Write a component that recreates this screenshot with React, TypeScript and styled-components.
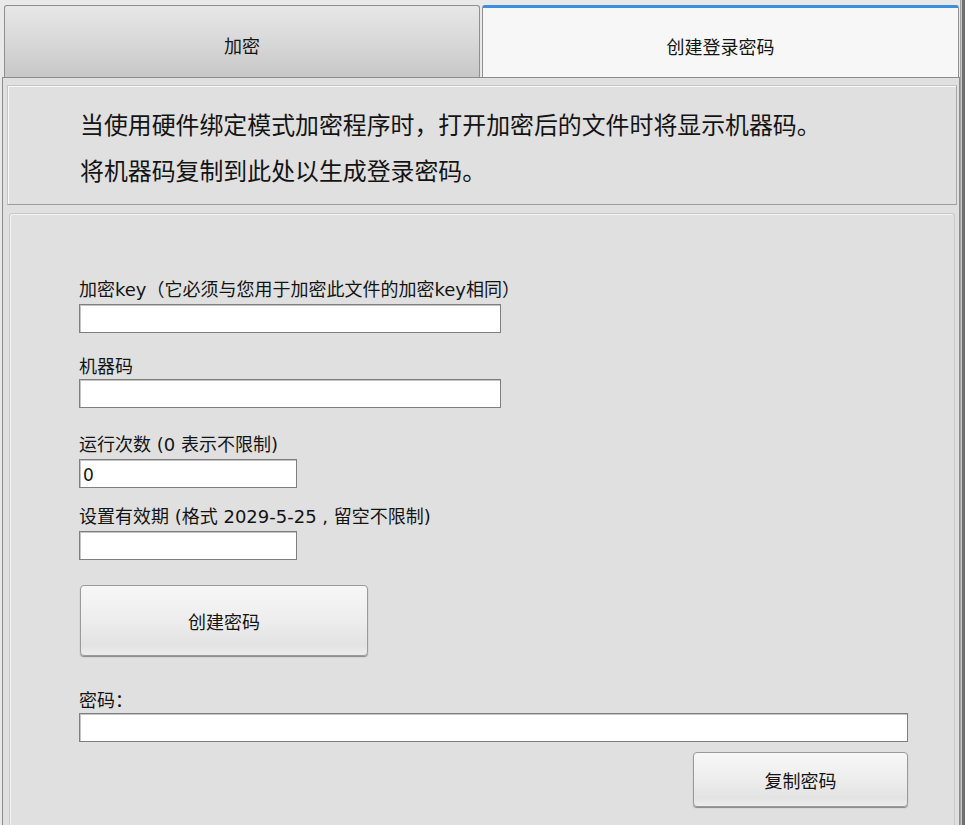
import styled, { createGlobalStyle } from "styled-components";

const GlobalStyle = createGlobalStyle`
  html, body {
    margin: 0;
    padding: 0;
    background: #e9e9e9;
  }
  * {
    box-sizing: border-box;
  }
`;

const Frame = styled.div`
  width: 965px;
  height: 825px;
  overflow: hidden;
  padding-top: 5px;
  background: linear-gradient(
    to left,
    #6e6e6e 0 3px,
    #c6c6c6 3px 4px,
    #a4a4a4 4px 5px,
    #e9e9e9 5px
  );
  font-family: "DejaVu Sans", "Noto Sans CJK SC", sans-serif;
  color: #141414;
  display: flex;
  flex-direction: column;
`;

const TabRow = styled.div`
  display: flex;
  gap: 2px;
  padding-left: 4px;
  height: 72px;
`;

const Tab = styled.div<{ $active?: boolean }>`
  width: ${({ $active }) => ($active ? "477px" : "476px")};
  display: flex;
  align-items: center;
  justify-content: center;
  padding-top: 6px;
  font-family: "Noto Sans CJK SC", sans-serif;
  font-size: 18px;
  border: 1px solid #8f8f8f;
  border-bottom: none;
  border-radius: 3px 3px 0 0;
  background: ${({ $active }) =>
    $active
      ? "#f7f7f7"
      : "linear-gradient(#e7e7e7, #dadada 45%, #c7c7c7)"};
  border-top: ${({ $active }) =>
    $active ? "3px solid #3b8fdd" : "1px solid #8f8f8f"};
`;

const Panel = styled.div`
  flex: 1;
  width: 958px;
  margin-left: 2px;
  border: 1px solid #8c8c8c;
  border-bottom: none;
  background: #e0e0e0;
  padding: 7px 2px 0 4px;
  display: flex;
  flex-direction: column;
`;

const InfoBox = styled.div`
  height: 120px;
  width: 950px;
  border: 1px solid #c4c4c4;
  border-bottom-color: #9c9c9c;
  border-right-color: #a8a8a8;
  box-shadow: inset 1px 1px 0 #fafafa;
  padding: 15px 0 0 72px;
  font-family: "Noto Sans CJK SC", sans-serif;
  font-size: 23.9px;
  line-height: 46px;
`;

const FormBox = styled.div`
  flex: 1;
  width: 946px;
  margin: 8px 0 0 2px;
  border: 1px solid #c9c9c9;
  border-bottom: none;
  border-radius: 3px 3px 0 0;
  box-shadow: inset 1px 1px 0 #f2f2f2;
  padding: 65px 0 0 69px;
  display: flex;
  flex-direction: column;
  align-items: flex-start;
`;

const Field = styled.div<{ $top: number; $gap: number }>`
  display: flex;
  flex-direction: column;
  margin-top: ${({ $top }) => $top}px;
  gap: ${({ $gap }) => $gap}px;
`;

const Label = styled.label`
  font-size: 18px;
  line-height: 22px;
  white-space: nowrap;
`;

const TextInput = styled.input<{ $width: number }>`
  width: ${({ $width }) => $width}px;
  height: 29px;
  border: 1px solid #7f7f7f;
  box-shadow: inset 1px 1px 0 #c4c4c4;
  background: #fff;
  padding: 2px 3px 0;
  font-family: "DejaVu Sans", sans-serif;
  font-size: 17px;
  color: #141414;
  outline: none;
`;

const Button = styled.button<{ $width: number; $height: number }>`
  width: ${({ $width }) => $width}px;
  height: ${({ $height }) => $height}px;
  border: 1px solid #9a9a9a;
  border-radius: 4px;
  background: linear-gradient(#f7f7f7, #ededed 50%, #e3e3e3 85%, #ececec);
  box-shadow: 0 1px 1px rgba(0, 0, 0, 0.4);
  font-family: "Noto Sans CJK SC", sans-serif;
  font-size: 18px;
  color: #141414;
  cursor: pointer;
`;

const CreateButton = styled(Button)`
  margin: 25px 0 0 1px;
`;

const CopyRow = styled.div`
  width: 829px;
  display: flex;
  justify-content: flex-end;
  margin-top: 10px;
`;

const App = () => {
  return (
    <>
      <GlobalStyle />
      <Frame>
        <TabRow>
          <Tab>加密</Tab>
          <Tab $active>创建登录密码</Tab>
        </TabRow>
        <Panel>
          <InfoBox>
            <div>当使用硬件绑定模式加密程序时，打开加密后的文件时将显示机器码。</div>
            <div>将机器码复制到此处以生成登录密码。</div>
          </InfoBox>
          <FormBox>
            <Field $top={0} $gap={3}>
              <Label>加密key（它必须与您用于加密此文件的加密key相同）</Label>
              <TextInput $width={422} />
            </Field>
            <Field $top={23} $gap={1}>
              <Label>机器码</Label>
              <TextInput $width={422} />
            </Field>
            <Field $top={26} $gap={3}>
              <Label>运行次数 (0 表示不限制)</Label>
              <TextInput $width={218} defaultValue="0" />
            </Field>
            <Field $top={18} $gap={3}>
              <Label>设置有效期 (格式 2029-5-25 , 留空不限制)</Label>
              <TextInput $width={218} />
            </Field>
            <CreateButton $width={288} $height={71}>
              创建密码
            </CreateButton>
            <Field $top={34} $gap={1}>
              <Label>密码：</Label>
              <TextInput $width={829} />
            </Field>
            <CopyRow>
              <Button $width={215} $height={55}>
                复制密码
              </Button>
            </CopyRow>
          </FormBox>
        </Panel>
      </Frame>
    </>
  );
};

export default App;
